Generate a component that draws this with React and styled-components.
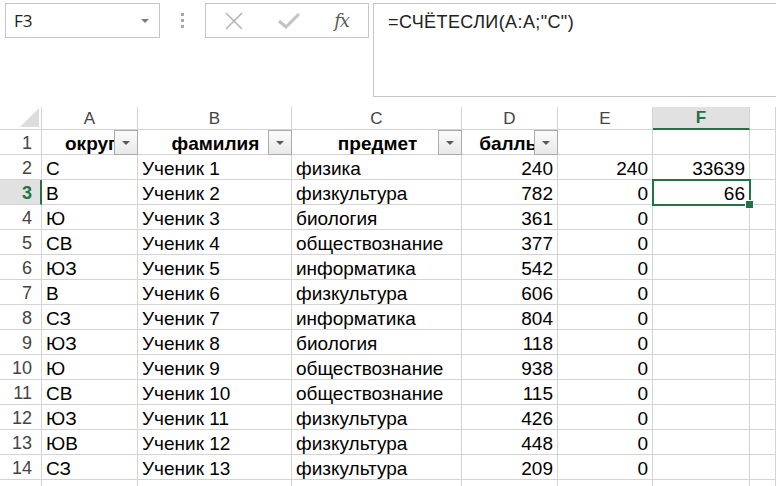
import React from 'react';
import styled, { createGlobalStyle, css } from 'styled-components';

const GlobalStyle = createGlobalStyle`
  html, body {
    margin: 0;
    padding: 0;
    background: #ffffff;
    overflow: hidden;
  }
  * {
    box-sizing: border-box;
  }
`;

const GREEN = '#217346';
const GRID = '#d4d4d4';

const StyledWrapper = styled.div`
  width: 776px;
  height: 486px;
  overflow: hidden;
  background: #ffffff;
  font-family: 'Liberation Sans', Arial, sans-serif;
`;

const StyledTopBar = styled.div`
  display: flex;
  align-items: flex-start;
  padding-top: 3px;
  padding-left: 5px;
  height: 107px;
`;

const StyledNameBox = styled.div`
  width: 155px;
  height: 35px;
  border: 1px solid #c6c6c6;
  display: flex;
  align-items: center;
  justify-content: space-between;
  padding: 0 10px 0 8px;
  font-family: 'Open Sans', 'Noto Sans', sans-serif;
  font-size: 17px;
  color: #222;
`;

const StyledSmallArrow = styled.span`
  width: 0;
  height: 0;
  border-left: 4px solid transparent;
  border-right: 4px solid transparent;
  border-top: 4px solid #7a7a7a;
`;

const StyledDots = styled.div`
  width: 45px;
  height: 35px;
  display: flex;
  flex-direction: column;
  align-items: center;
  justify-content: center;
  gap: 3px;

  span {
    width: 3px;
    height: 3px;
    background: #a9a9a9;
  }
`;

const StyledIconBox = styled.div`
  width: 164px;
  height: 35px;
  border: 1px solid #c6c6c6;
  display: flex;
  align-items: center;
  justify-content: space-between;
  padding: 0 18px 0 18px;
`;

const StyledFx = styled.span`
  font-family: 'DejaVu Serif', 'Liberation Serif', serif;
  font-style: italic;
  font-size: 18px;
  color: #5a5a5a;
  letter-spacing: -1px;
  margin-right: 1px;
`;

const StyledFormula = styled.div`
  flex: 1;
  height: 94px;
  margin-left: 4px;
  border: 1px solid #c6c6c6;
  border-right: none;
  padding: 8px 14px;
  font-family: 'Liberation Sans', Arial, sans-serif;
  font-size: 18px;
  letter-spacing: 0.4px;
  color: #222;
`;

const StyledSheet = styled.div`
  display: grid;
  grid-template-columns: 42px 96px 154px 170px 96px 95px 97px 1fr;
  grid-template-rows: 23px repeat(15, 25px);
`;

const StyledCorner = styled.div`
  border-right: 1px solid ${GRID};
  border-bottom: 1px solid ${GRID};
  display: flex;
  align-items: flex-end;
  justify-content: flex-end;
  padding: 0 2px 2px 0;
`;

const StyledColHead = styled.div`
  border-right: 1px solid ${GRID};
  border-bottom: 1px solid ${GRID};
  display: flex;
  align-items: center;
  justify-content: center;
  padding-top: 1px;
  font-size: 17px;
  color: #444;

  ${({ $active }) =>
    $active &&
    css`
      background: #e1e1e1;
      border-bottom: 2px solid ${GREEN};
      color: ${GREEN};
      font-weight: bold;
    `}
`;

const StyledRowHead = styled.div`
  border-right: 1px solid ${GRID};
  border-bottom: 1px solid ${GRID};
  display: flex;
  align-items: center;
  justify-content: flex-end;
  padding: 2px 9px 0 0;
  font-size: 18px;
  color: #444;

  ${({ $active }) =>
    $active &&
    css`
      background: #e1e1e1;
      border-right: 2px solid ${GREEN};
      padding-right: 8px;
      color: ${GREEN};
      font-weight: bold;
    `}
`;

const StyledCell = styled.div`
  position: relative;
  border-right: 1px solid ${GRID};
  border-bottom: 1px solid ${GRID};
  display: flex;
  align-items: center;
  justify-content: ${({ $align }) => ($align === 'right' ? 'flex-end' : $align === 'center' ? 'center' : 'flex-start')};
  padding: 3px 4px 0 4px;
  font-size: 19px;
  font-weight: ${({ $bold }) => ($bold ? 'bold' : 'normal')};
  color: #000;
  white-space: nowrap;
  overflow: visible;

  ${({ $selected }) =>
    $selected &&
    css`
      z-index: 2;
      &::after {
        content: '';
        position: absolute;
        top: -1px;
        left: -1px;
        right: -2px;
        bottom: -2px;
        border: 2px solid ${GREEN};
      }
      &::before {
        content: '';
        position: absolute;
        right: -5px;
        bottom: -5px;
        width: 7px;
        height: 7px;
        background: ${GREEN};
        border: 1px solid #fff;
        z-index: 3;
      }
    `}
`;

const StyledHeaderText = styled.span`
  overflow: hidden;
  margin-left: 2px;
`;

const StyledFilterButton = styled.div`
  position: absolute;
  top: 0;
  right: -1px;
  width: 24px;
  height: 25px;
  border: 1px solid #ababab;
  background: linear-gradient(#fbfbfb, #e9e9e9);
  display: flex;
  align-items: center;
  justify-content: center;
  z-index: 1;
`;

const StyledFilterArrow = styled.span`
  width: 0;
  height: 0;
  border-left: 4px solid transparent;
  border-right: 4px solid transparent;
  border-top: 4px solid #595959;
  margin-top: 1px;
`;

// G column is only partly visible, so its letter stays off screen
const columns = ['A', 'B', 'C', 'D', 'E', 'F', ''];

const headers = ['округ', 'фамилия', 'предмет', 'баллы'];

const data = [
  ['С', 'Ученик 1', 'физика', '240', '240', '33639'],
  ['В', 'Ученик 2', 'физкультура', '782', '0', '66'],
  ['Ю', 'Ученик 3', 'биология', '361', '0', ''],
  ['СВ', 'Ученик 4', 'обществознание', '377', '0', ''],
  ['ЮЗ', 'Ученик 5', 'информатика', '542', '0', ''],
  ['В', 'Ученик 6', 'физкультура', '606', '0', ''],
  ['СЗ', 'Ученик 7', 'информатика', '804', '0', ''],
  ['ЮЗ', 'Ученик 8', 'биология', '118', '0', ''],
  ['Ю', 'Ученик 9', 'обществознание', '938', '0', ''],
  ['СВ', 'Ученик 10', 'обществознание', '115', '0', ''],
  ['ЮЗ', 'Ученик 11', 'физкультура', '426', '0', ''],
  ['ЮВ', 'Ученик 12', 'физкультура', '448', '0', ''],
  ['СЗ', 'Ученик 13', 'физкультура', '209', '0', ''],
  ['', '', '', '', '', ''],
];

const CrossIcon = () => (
  <svg width="20" height="18" viewBox="0 0 20 18">
    <path d="M2 1 L18 17 M18 1 L2 17" stroke="#b4b4b4" strokeWidth="1.6" fill="none" />
  </svg>
);

const CheckIcon = () => (
  <svg width="22" height="16" viewBox="0 0 22 16">
    <path d="M1 8 L8 14 L21 1" stroke="#c2c2c2" strokeWidth="3" fill="none" />
  </svg>
);

const CornerTriangle = () => (
  <svg width="19" height="19" viewBox="0 0 19 19">
    <polygon points="19,0 19,19 0,19" fill="#dcdcdc" />
  </svg>
);

class App extends React.Component {
  render() {
    const selRow = 3;
    const selCol = 'F';

    return (
      <>
        <GlobalStyle />
        <StyledWrapper>
          <StyledTopBar>
            <StyledNameBox>
              F3
              <StyledSmallArrow />
            </StyledNameBox>
            <StyledDots>
              <span />
              <span />
              <span />
            </StyledDots>
            <StyledIconBox>
              <CrossIcon />
              <CheckIcon />
              <StyledFx>fx</StyledFx>
            </StyledIconBox>
            <StyledFormula>=СЧЁТЕСЛИ(A:A;"C")</StyledFormula>
          </StyledTopBar>

          <StyledSheet>
            <StyledCorner>
              <CornerTriangle />
            </StyledCorner>
            {columns.map((c, i) => (
              <StyledColHead key={i} $active={c === selCol}>
                {c}
              </StyledColHead>
            ))}

            <StyledRowHead>1</StyledRowHead>
            {columns.map((c, i) => (
              <StyledCell key={i} $align="center" $bold>
                {headers[i] && <StyledHeaderText>{headers[i]}</StyledHeaderText>}
                {headers[i] && (
                  <StyledFilterButton>
                    <StyledFilterArrow />
                  </StyledFilterButton>
                )}
              </StyledCell>
            ))}

            {data.map((row, r) => {
              const rowNum = r + 2;
              const last = r === data.length - 1;
              return (
                <React.Fragment key={rowNum}>
                  <StyledRowHead $active={rowNum === selRow}>{last ? '' : rowNum}</StyledRowHead>
                  {row.map((v, i) => (
                    <StyledCell
                      key={i}
                      $align={i >= 3 ? 'right' : 'left'}
                      $selected={rowNum === selRow && columns[i] === selCol}
                    >
                      {v}
                    </StyledCell>
                  ))}
                  <StyledCell />
                </React.Fragment>
              );
            })}
          </StyledSheet>
        </StyledWrapper>
      </>
    );
  }
}

export default App;
